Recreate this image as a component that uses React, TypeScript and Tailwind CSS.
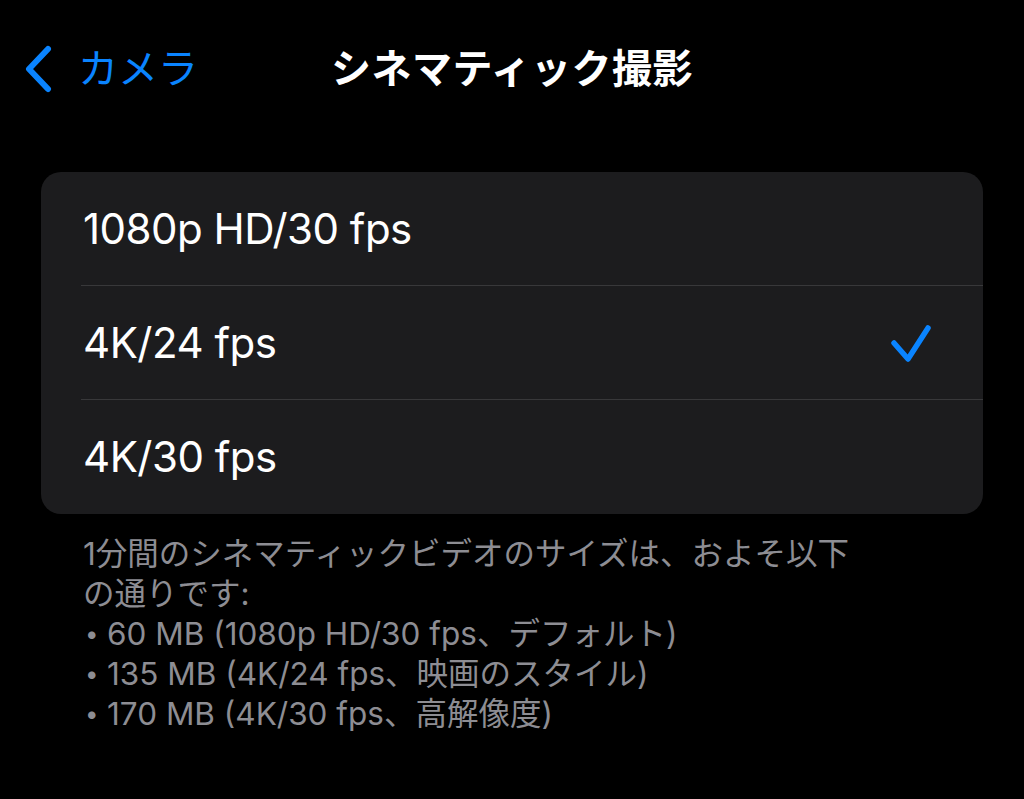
const font = { fontFamily: '"Inter", "Noto Sans CJK JP", sans-serif' };

const options = [
  { label: "1080p HD/30 fps", selected: false },
  { label: "4K/24 fps", selected: true },
  { label: "4K/30 fps", selected: false },
];

const sizes = [
  "60 MB (1080p HD/30 fps、デフォルト)",
  "135 MB (4K/24 fps、映画のスタイル)",
  "170 MB (4K/30 fps、高解像度)",
];

export default function App() {
  return (
    <div className="min-h-[799px] w-full bg-black text-white" style={font}>
      {/* Nav bar */}
      <div className="grid grid-cols-[1fr_auto_1fr] items-center h-[140px] pb-[2px]">
        <div className="flex items-center pl-[22px] text-[#0a84ff]">
          <svg width="34" height="48" viewBox="0 0 34 48" fill="none" stroke="currentColor" strokeWidth="6" strokeLinecap="round" strokeLinejoin="round">
            <path d="M26 4 L7 24 L26 44" />
          </svg>
          <span className="ml-[22px] text-[40px] leading-none">カメラ</span>
        </div>
        <h1 className="text-[40px] font-bold leading-none tracking-[0.5px]">シネマティック撮影</h1>
        <div />
      </div>

      {/* Options card */}
      <div className="mx-[41px] mt-[32px] rounded-[20px] bg-[#1c1c1e] overflow-hidden">
        {options.map((o, i) => (
          <div key={o.label} className="pl-[40px]">
            <div
              className={`flex items-center justify-between h-[114px] pr-[49px] ${
                i < options.length - 1 ? "border-b border-[#38383a]" : ""
              }`}
            >
              <span className="text-[42px] leading-none tracking-[-0.5px] pl-[2px]">{o.label}</span>
              {o.selected && (
                <svg width="46" height="44" viewBox="0 0 46 44" fill="none" stroke="#0a84ff" strokeWidth="5.5" strokeLinecap="round" strokeLinejoin="round" className="mt-[2px]">
                  <path d="M6 21 L20 37 L40 6" />
                </svg>
              )}
            </div>
          </div>
        ))}
      </div>

      {/* Footer */}
      <div className="pl-[83px] pt-[20px] text-[31.5px] leading-[40px] text-[#8d8d93] whitespace-nowrap">
        <p>
          1分間のシネマティックビデオのサイズは、およそ以下
          <br />
          の通りです:
        </p>
        {sizes.map((s) => (
          <p key={s} className="flex">
            <span className="w-[24px] pl-[2px] text-[24px]">•</span>
            <span>{s}</span>
          </p>
        ))}
      </div>
    </div>
  );
}
